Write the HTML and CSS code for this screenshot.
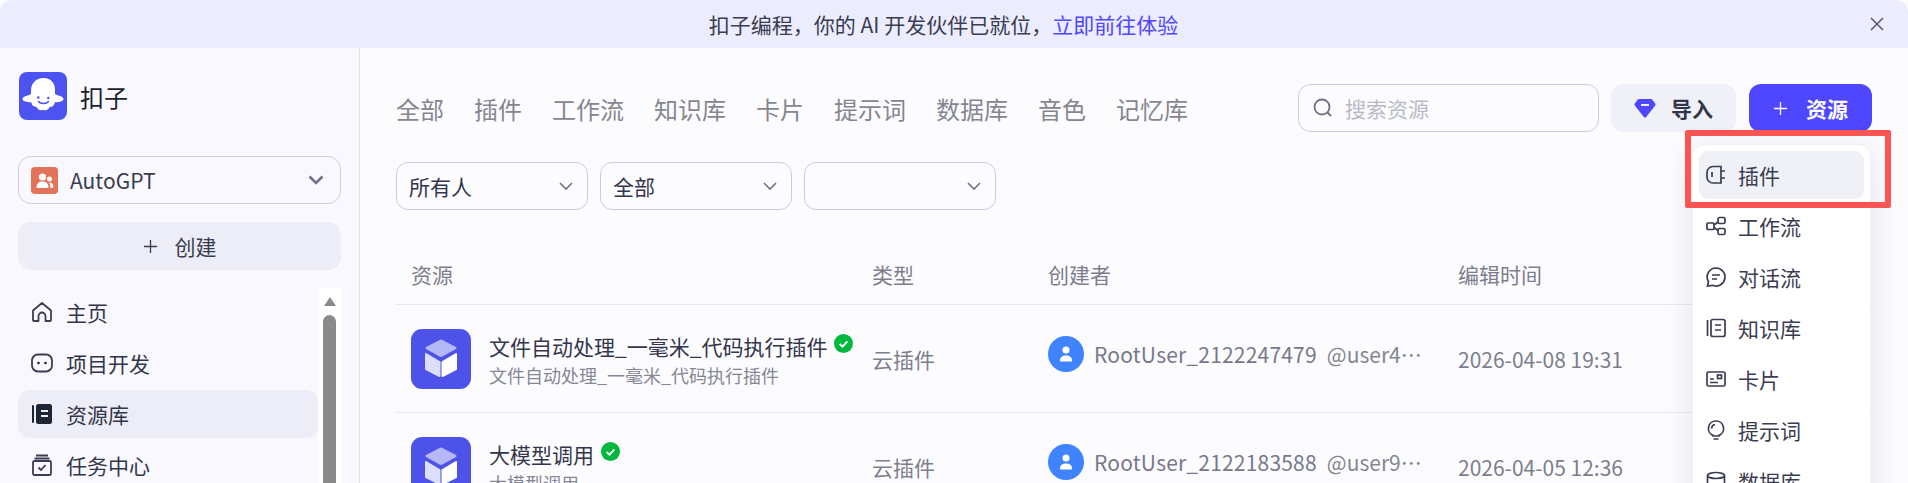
FILE: index.html
```html
<!DOCTYPE html>
<html lang="zh-CN">
<head>
    <meta charset="UTF-8">
    <meta name="viewport" content="width=device-width, initial-scale=1.0">
    <title>扣子 - 资源库</title>
    <link rel="stylesheet" href="styles.css">
</head>
<body>
    <div class="banner">
        <span>扣子编程，你的 AI 开发伙伴已就位，<a class="banner-link">立即前往体验</a></span>
        <svg class="banner-close" viewBox="0 0 14 14"><path d="M1 1l12 12M13 1L1 13"/></svg>
    </div>
    <div class="layout">
        <aside class="sidebar">
            <div class="brand">
                <svg class="brand-logo" viewBox="0 0 48 48">
                    <rect width="48" height="48" rx="8" fill="#4d53f0"/>
                    <path d="M24.500 6C17 6 12 11.500 12 18.500v3.700C8.500 23.500 3.500 24.500 3.500 27c0 2.600 5 3.300 8.800 3.200.5 2.900 2.700 5 5.300 4.700 1.300 3 4.200 4.100 6.500 2.800 2.400 1.300 5.300.2 6.400-2.700 2.700.3 4.900-1.800 5.400-4.800 3.700.1 8.600-.6 8.600-3.200 0-2.500-5-3.600-8.500-4.800v-3.700C36.500 11.500 32 6 24.500 6z" fill="#fff"/>
                    <circle cx="19.300" cy="25.500" r="1.300" fill="#4d53f0"/>
                    <circle cx="29.300" cy="26" r="1.200" fill="#4d53f0"/>
                    <path d="M19.500 29.500c1.800 2.600 7.800 2.800 10 0" fill="none" stroke="#4d53f0" stroke-width="1.500" stroke-linecap="round"/>
                </svg>
                <span class="brand-name">扣子</span>
            </div>
            <div class="workspace">
                <span class="workspace-icon">
                    <svg viewBox="0 0 27 27"><circle cx="11.500" cy="10" r="3.600"/><path d="M5.500 20c0-3.500 2.500-5.500 6-5.500s6 2 6 5.500c0 .6-.4 1-1 1h-10c-.6 0-1-.4-1-1z"/><circle cx="18.500" cy="12" r="2.500"/><path d="M19 15.500c2 .2 3.500 1.700 3.500 4 0 .9-.5 1.500-1.300 1.500h-1.900c.3-2.300-.2-4-1.300-5.300z"/></svg>
                </span>
                <span class="workspace-name">AutoGPT</span>
                <svg class="workspace-arrow" viewBox="0 0 16 16"><path d="M1.500 4.500L8 11l6.500-6.500"/></svg>
            </div>
            <div class="create-btn">
                <svg class="plus-icon" viewBox="0 0 16 16"><path d="M8 1v14M1 8h14"/></svg>
                <span>创建</span>
            </div>
            <div class="nav-wrap">
                <nav class="nav">
                    <div class="nav-item">
                        <svg class="nav-icon" viewBox="0 0 24 24"><path d="M3 10.500L12 3l9 7.500V20a1 1 0 0 1-1 1h-4.500v-5a3.500 3.500 0 0 0-7 0v5H4a1 1 0 0 1-1-1z"/></svg>
                        <span>主页</span>
                    </div>
                    <div class="nav-item">
                        <svg class="nav-icon" viewBox="0 0 24 24"><rect x="2" y="3.500" width="20" height="17" rx="6"/><circle class="dot" cx="8.500" cy="12" r="1.300"/><circle class="dot" cx="15.500" cy="12" r="1.300"/></svg>
                        <span>项目开发</span>
                    </div>
                    <div class="nav-item active">
                        <svg class="nav-icon" viewBox="0 0 24 24"><rect class="solid" x="6" y="2" width="16" height="20" rx="2.500"/><rect class="solid" x="2" y="3" width="2" height="18" rx="1"/><path class="cut" d="M11 9h7M11 14h7"/></svg>
                        <span>资源库</span>
                    </div>
                    <div class="nav-item">
                        <svg class="nav-icon" viewBox="0 0 24 24"><path d="M6 2.500h12M4.500 5.500h15"/><rect x="3" y="8" width="18" height="14" rx="1.500"/><path d="M8.500 14.500l2.500 2.500 4.500-5"/></svg>
                        <span>任务中心</span>
                    </div>
                </nav>
                <div class="scrollbar">
                    <div class="scroll-arrow"></div>
                    <div class="scroll-thumb"></div>
                </div>
            </div>
        </aside>
        <main class="main">
            <div class="toolbar">
                <div class="tabs">
                    <span>全部</span><span>插件</span><span>工作流</span><span>知识库</span><span>卡片</span><span>提示词</span><span>数据库</span><span>音色</span><span>记忆库</span>
                </div>
                <div class="actions">
                    <div class="search">
                        <svg class="search-icon" viewBox="0 0 20 20"><circle cx="9" cy="9" r="7.500"/><path d="M14.500 14.500L18 18"/></svg>
                        <span>搜索资源</span>
                    </div>
                    <div class="btn btn-import">
                        <svg class="gem" viewBox="0 0 22 20"><path d="M5 1h12a1.500 1.500 0 0 1 1.200.600l3 4a1.500 1.500 0 0 1 0 1.800l-9 11.500a1.500 1.500 0 0 1-2.400 0L.8 7.400a1.500 1.500 0 0 1 0-1.800l3-4A1.500 1.500 0 0 1 5 1z"/><path class="gem-cut" d="M7 7h8"/></svg>
                        <span>导入</span>
                    </div>
                    <div class="btn btn-primary">
                        <svg class="plus-icon" viewBox="0 0 16 16"><path d="M8 1v14M1 8h14"/></svg>
                        <span>资源</span>
                    </div>
                </div>
            </div>
            <div class="filters">
                <div class="filter"><span>所有人</span><svg viewBox="0 0 14 14"><path d="M1 4l6 6 6-6"/></svg></div>
                <div class="filter"><span>全部</span><svg viewBox="0 0 14 14"><path d="M1 4l6 6 6-6"/></svg></div>
                <div class="filter"><span></span><svg viewBox="0 0 14 14"><path d="M1 4l6 6 6-6"/></svg></div>
            </div>
            <div class="table">
                <div class="table-head">
                    <div>资源</div><div>类型</div><div>创建者</div><div>编辑时间</div>
                </div>
                <div class="table-row">
                    <div class="cell-res">
                        <svg class="res-icon" viewBox="0 0 60 60"><rect width="60" height="60" rx="11" fill="#4d53e8"/><path d="M15.500 19L30 11.500 44.500 19 30 27z" fill="#b4b8f6" stroke="#b4b8f6" stroke-width="2" stroke-linejoin="round"/><path d="M15 25l13.500 8v14l-13.500-7z" fill="#dcdefc" stroke="#dcdefc" stroke-width="2" stroke-linejoin="round"/><path d="M45 25l-13.500 8v14l13.500-7z" fill="#fff" stroke="#fff" stroke-width="2" stroke-linejoin="round"/></svg>
                        <div class="res-text">
                            <div class="res-title">文件自动处理_一毫米_代码执行插件<svg class="check" viewBox="0 0 20 20"><circle cx="10" cy="10" r="10"/><path d="M6 10.500l3 2.800 5-5.500"/></svg></div>
                            <div class="res-sub">文件自动处理_一毫米_代码执行插件</div>
                        </div>
                    </div>
                    <div class="cell-text">云插件</div>
                    <div class="cell-user">
                        <svg class="avatar" viewBox="0 0 36 36"><circle cx="18" cy="18" r="18" fill="#3f83ff"/><circle cx="18" cy="14" r="3.500" fill="#fff"/><path d="M12 24.500c0-3.500 2.500-5 6-5s6 1.500 6 5c0 .6-.4 1-1 1H13c-.6 0-1-.4-1-1z" fill="#fff"/></svg>
                        <span class="user-name">RootUser_2122247479</span>
                        <span class="user-handle">@user4…</span>
                    </div>
                    <div class="cell-text">2026-04-08 19:31</div>
                </div>
                <div class="table-row">
                    <div class="cell-res">
                        <svg class="res-icon" viewBox="0 0 60 60"><rect width="60" height="60" rx="11" fill="#4d53e8"/><path d="M15.500 19L30 11.500 44.500 19 30 27z" fill="#b4b8f6" stroke="#b4b8f6" stroke-width="2" stroke-linejoin="round"/><path d="M15 25l13.500 8v14l-13.500-7z" fill="#dcdefc" stroke="#dcdefc" stroke-width="2" stroke-linejoin="round"/><path d="M45 25l-13.500 8v14l13.500-7z" fill="#fff" stroke="#fff" stroke-width="2" stroke-linejoin="round"/></svg>
                        <div class="res-text">
                            <div class="res-title">大模型调用<svg class="check" viewBox="0 0 20 20"><circle cx="10" cy="10" r="10"/><path d="M6 10.500l3 2.800 5-5.500"/></svg></div>
                            <div class="res-sub">大模型调用</div>
                        </div>
                    </div>
                    <div class="cell-text">云插件</div>
                    <div class="cell-user">
                        <svg class="avatar" viewBox="0 0 36 36"><circle cx="18" cy="18" r="18" fill="#3f83ff"/><circle cx="18" cy="14" r="3.500" fill="#fff"/><path d="M12 24.500c0-3.500 2.500-5 6-5s6 1.500 6 5c0 .6-.4 1-1 1H13c-.6 0-1-.4-1-1z" fill="#fff"/></svg>
                        <span class="user-name">RootUser_2122183588</span>
                        <span class="user-handle">@user9…</span>
                    </div>
                    <div class="cell-text">2026-04-05 12:36</div>
                </div>
            </div>

            <div class="menu">
                <div class="menu-item selected">
                    <svg viewBox="0 0 20 20"><path d="M7 1.500h8V18H7a6 6 0 0 1-6-6V7.500a6 6 0 0 1 6-6z"/><path d="M6 7v5M15 6h4M15 13h4"/></svg>
                    <span>插件</span>
                </div>
                <div class="menu-item">
                    <svg viewBox="0 0 20 20"><rect x="1" y="7" width="7" height="6.500" rx="1"/><rect x="12" y="1.500" width="7" height="6" rx="1.500"/><rect x="12" y="12.500" width="7" height="6" rx="1.500"/><path d="M8 9l4-3M8 11.500l4 3"/></svg>
                    <span>工作流</span>
                </div>
                <div class="menu-item">
                    <svg viewBox="0 0 20 20"><path d="M10 1a9 9 0 1 1-3.500 17.300L1.500 19l1-4.300A9 9 0 0 1 10 1z"/><path d="M6 8h8M6 12h5"/></svg>
                    <span>对话流</span>
                </div>
                <div class="menu-item">
                    <svg viewBox="0 0 20 20"><rect x="5" y="1.500" width="14" height="17" rx="2"/><path d="M1.500 2v16M9 7h6M9 12h6"/></svg>
                    <span>知识库</span>
                </div>
                <div class="menu-item">
                    <svg viewBox="0 0 20 20"><rect x="1" y="3" width="18" height="14" rx="1.500"/><rect x="11.500" y="6" width="4" height="3.500"/><path d="M4 10h4M4 13.500h8"/></svg>
                    <span>卡片</span>
                </div>
                <div class="menu-item">
                    <svg viewBox="0 0 20 20"><path d="M10 1a7.500 7.500 0 0 1 3 14.400V16H7v-.6A7.500 7.500 0 0 1 10 1z"/><path d="M5.500 8.500A4.500 4.500 0 0 1 9 4.500M7.500 19h5"/></svg>
                    <span>提示词</span>
                </div>
                <div class="menu-item">
                    <svg viewBox="0 0 20 20"><ellipse cx="10" cy="4.500" rx="8.500" ry="3"/><path d="M1.500 4.500v11c0 1.700 3.800 3 8.500 3s8.500-1.300 8.500-3v-11"/></svg>
                    <span>数据库</span>
                </div>
            </div>
            <div class="highlight"></div>
        </main>
    </div>
</body>
</html>
```

FILE: styles.css
```css
* {
    box-sizing: border-box;
}
html, body {
    height: 483px;
    margin: 0;
    overflow: hidden;
}
body {
    font-family: "Noto Sans CJK SC", "Noto Sans", sans-serif;
    font-size: 21px;
    color: #33364a;
    background: #fcfcff;
    display: flex;
    flex-direction: column;
}

/* top banner */
.banner {
    height: 48px;
    flex: none;
    display: flex;
    align-items: center;
    justify-content: center;
    padding-right: 21px;
    background: #ebecfe;
    border-radius: 12px 12px 0 0;
    color: #3a3d50;
    position: relative;
}
.banner-link {
    color: #4f47ff;
}
.banner-close {
    position: absolute;
    right: 24px;
    top: 17px;
    width: 14px;
    height: 14px;
    fill: none;
    stroke: #54566a;
    stroke-width: 1.5;
}

.layout {
    flex: 1;
    display: flex;
    min-height: 0;
    position: relative;
}

/* sidebar */
.sidebar {
    width: 360px;
    flex: none;
    padding: 24px 18px 0;
    background: #f9f8fe;
    border-right: 1.5px solid #e3e3ee;
    display: flex;
    flex-direction: column;
}
.brand {
    display: flex;
    align-items: center;
    gap: 13px;
    height: 48px;
    margin-bottom: 36px;
    padding-left: 1px;
}
.brand-logo {
    width: 48px;
    height: 48px;
}
.brand-name {
    font-size: 24px;
    color: #1c1f2e;
}
.workspace {
    height: 48px;
    display: flex;
    align-items: center;
    padding: 0 16px 0 12px;
    border: 1.5px solid #cacce0;
    border-radius: 13px;
    margin-bottom: 18px;
}
.workspace-icon {
    width: 27px;
    height: 27px;
    background: #e27258;
    border-radius: 4px;
}
.workspace-icon svg {
    display: block;
    fill: #fff;
}
.workspace-name {
    margin-left: 12px;
    flex: 1;
    color: #3a3d50;
}
.workspace-arrow {
    width: 16px;
    height: 16px;
    fill: none;
    stroke: #6f7184;
    stroke-width: 2.6;
}
.create-btn {
    height: 48px;
    flex: none;
    display: flex;
    align-items: center;
    justify-content: center;
    gap: 17px;
    background: #ecedf6;
    border-radius: 13px;
    margin-bottom: 18px;
    color: #3a3d50;
}
.plus-icon {
    width: 15px;
    height: 15px;
    fill: none;
    stroke: currentColor;
    stroke-width: 1.4;
}
.nav-wrap {
    display: flex;
    flex: 1;
    min-height: 0;
}
.nav {
    width: 300px;
    display: flex;
    flex-direction: column;
    gap: 3px;
}
.nav-item {
    height: 48px;
    flex: none;
    display: flex;
    align-items: center;
    gap: 12px;
    padding-left: 12px;
    border-radius: 12px;
}
.nav-item.active {
    background: #ecedf6;
}
.nav-icon {
    width: 24px;
    height: 24px;
    fill: none;
    stroke: #3a3d52;
    stroke-width: 1.8;
    stroke-linejoin: round;
}
.nav-icon .dot,
.nav-icon .solid {
    fill: #1f2336;
    stroke: none;
}
.nav-icon .cut {
    stroke: #ecedf6;
    stroke-width: 2;
}
.scrollbar {
    width: 23px;
    background: #fff;
    display: flex;
    flex-direction: column;
    align-items: center;
    padding-top: 9px;
}
.scroll-arrow {
    width: 0;
    height: 0;
    border-left: 6px solid transparent;
    border-right: 6px solid transparent;
    border-bottom: 9px solid #8a8a8a;
    margin-bottom: 9px;
}
.scroll-thumb {
    width: 13px;
    flex: 1;
    background: #8a8a8a;
    border-radius: 7px 7px 0 0;
}

/* main area */
.main {
    flex: 1;
    min-width: 0;
    padding: 36px 36px 0;
    position: relative;
}
.toolbar {
    display: flex;
    justify-content: space-between;
    align-items: center;
    height: 48px;
    margin-bottom: 30px;
}
.tabs {
    display: flex;
    gap: 30px;
    font-size: 24px;
    color: #85868f;
}
.actions {
    display: flex;
    gap: 12px;
}
.search {
    width: 301px;
    height: 48px;
    display: flex;
    align-items: center;
    gap: 12px;
    padding-left: 14px;
    border: 1.5px solid #cacce0;
    border-radius: 12px;
    color: #b9bac6;
}
.search-icon {
    width: 20px;
    height: 20px;
    fill: none;
    stroke: #6f7184;
    stroke-width: 1.8;
}
.btn {
    height: 48px;
    display: flex;
    align-items: center;
    justify-content: center;
    border-radius: 12px;
    font-weight: 700;
}
.btn-import {
    width: 125px;
    gap: 15px;
    background: #f0f0f9;
}
.gem {
    width: 22px;
    height: 20px;
    fill: #4f47ff;
}
.gem-cut {
    fill: none;
    stroke: #f0f0f9;
    stroke-width: 2;
}
.btn-primary {
    width: 123px;
    margin-left: 1px;
    gap: 18px;
    background: #4f47ff;
    color: #fff;
}
.filters {
    display: flex;
    gap: 12px;
    margin-bottom: 38px;
}
.filter {
    width: 192px;
    height: 48px;
    display: flex;
    align-items: center;
    justify-content: space-between;
    padding: 0 14px 0 12px;
    border: 1.5px solid #cacce0;
    border-radius: 12px;
}
.filter svg {
    width: 14px;
    height: 14px;
    fill: none;
    stroke: #71727f;
    stroke-width: 1.6;
}

/* resource table */
.table-head,
.table-row {
    display: grid;
    grid-template-columns: 461px 176px 410px 1fr;
    border-bottom: 1.5px solid #e6e8f6;
}
.table-head {
    height: 57px;
    padding-bottom: 4px;
    align-items: center;
    color: #7d7e8c;
}
.table-head > div {
    padding-left: 15px;
}
.table-row {
    height: 108px;
    align-items: center;
}
.cell-res {
    display: flex;
    align-items: center;
    gap: 18px;
    padding-left: 15px;
}
.res-icon {
    width: 60px;
    height: 60px;
    flex: none;
}
.res-title {
    display: flex;
    align-items: center;
    gap: 7px;
    height: 30px;
}
.check {
    width: 19px;
    height: 19px;
    margin-top: -4px;
}
.check circle {
    fill: #00b83e;
}
.check path {
    fill: none;
    stroke: #fff;
    stroke-width: 2;
}
.res-sub {
    margin-top: 2px;
    height: 24px;
    line-height: 24px;
    font-size: 18px;
    color: #868795;
}
.cell-text {
    padding-left: 15px;
    color: #7d7e8c;
}
.cell-user {
    display: flex;
    align-items: center;
    padding: 0 0 10px 15px;
    color: #77788a;
}
.avatar {
    width: 36px;
    height: 36px;
    flex: none;
    margin-right: 10px;
}
.user-name {
    letter-spacing: 0.2px;
}
.user-handle {
    margin-left: 10px;
    color: #85868f;
}

/* dropdown over the table */
.menu {
    position: absolute;
    top: 96px;
    right: 37px;
    width: 179px;
    padding: 6px;
    background: #fff;
    border: 1px solid #f0f0f6;
    border-radius: 12px;
    box-shadow: 0 6px 30px rgba(40, 40, 80, 0.12);
    display: flex;
    flex-direction: column;
    gap: 3px;
}
.menu-item {
    height: 48px;
    flex: none;
    display: flex;
    align-items: center;
    gap: 12px;
    padding-left: 7px;
    border-radius: 9px;
    color: #3a3d50;
}
.menu-item.selected {
    background: #f0f1f7;
}
.menu-item svg {
    width: 20px;
    height: 20px;
    fill: none;
    stroke: #3a3d52;
    stroke-width: 1.7;
}
.highlight {
    position: absolute;
    top: 82px;
    right: 17px;
    width: 206px;
    height: 78px;
    border: 6px solid #fc5453;
    border-radius: 2px;
}
```
